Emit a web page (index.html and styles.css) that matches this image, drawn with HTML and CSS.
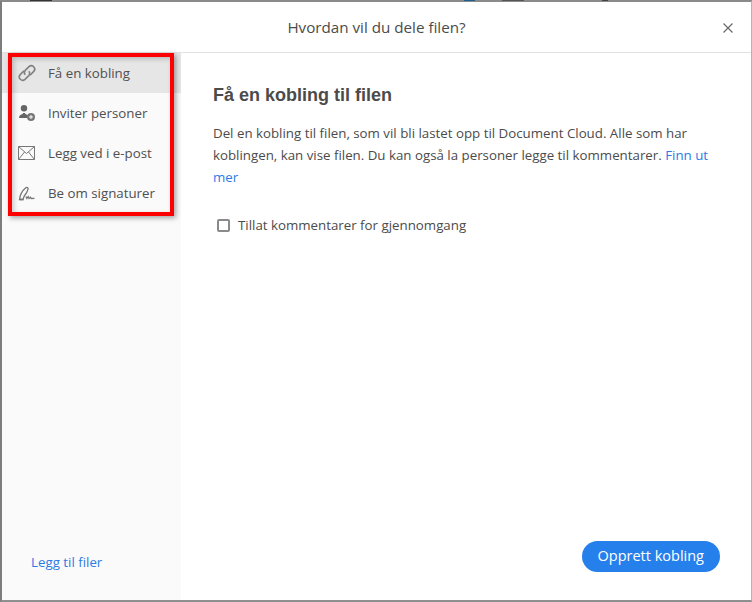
FILE: index.html
```html
<!DOCTYPE html>
<html lang="en">
<head>
    <meta charset="UTF-8">
    <meta name="viewport" content="width=device-width, initial-scale=1.0">
    <title>Hvordan vil du dele filen?</title>
    <link rel="stylesheet" href="styles.css">
</head>
<body>
    <div class="dialog">
        <div class="backdrop"></div>
        <header class="header">
            <h1 class="title">Hvordan vil du dele filen?</h1>
            <svg class="close" width="10" height="10" viewBox="0 0 10 10"><path d="M.5.5l9 9M9.5.5l-9 9" stroke="#666" stroke-width="1.1" fill="none"/></svg>
        </header>
        <div class="body">
            <aside class="sidebar">
                <nav class="menu">
                    <div class="item active">
                        <svg class="icon" width="20" height="20" viewBox="0 0 20 20" fill="none" stroke="#808080" stroke-width="1.6"><g transform="translate(-1 0)"><path d="M7 7.800L3.200 11.600A3.400 3.400 0 0 0 8 16.400L11.800 12.600A3.400 3.400 0 0 0 11.800 8.200"/><path d="M13 12.200L16.800 8.400A3.400 3.400 0 0 0 12 3.600L8.200 7.400A3.400 3.400 0 0 0 8.200 11.800"/></g></svg>
                        <span>Få en kobling</span>
                    </div>
                    <div class="item">
                        <svg class="icon" width="20" height="20" viewBox="0 0 20 20"><circle cx="6" cy="5.200" r="3.200" fill="#666"/><path d="M1 15c0-2 1-3 3-3.700.8-.3 1-.8 1-1.300h2c0 .5.200 1 1 1.300 1 .4 1.800.8 2.300 1.500L9 15z" fill="#666"/><circle cx="13" cy="14" r="4" fill="#777"/><path d="M13 12v4M11 14h4" stroke="#fff" stroke-width="1"/></svg>
                        <span>Inviter personer</span>
                    </div>
                    <div class="item">
                        <svg class="icon" width="20" height="20" viewBox="0 0 20 20" fill="none" stroke="#777"><path d="M.5 3.500h16v13H.5z"/><path d="M.5 3.500l8 7 8-7M.5 16.500l6-7.500M16.500 16.500l-6-7.500"/></svg>
                        <span>Legg ved i e-post</span>
                    </div>
                    <div class="item">
                        <svg class="icon" width="20" height="20" viewBox="0 0 20 20" fill="none" stroke="#777" stroke-width="1.300"><path d="M1.500 16.500C2 12 4.500 7.500 7.500 5c1.500-1.200 3-.4 2.500 1.300C9.300 9 7.500 11.500 6 13.500l-1 3z"/><path d="M1.500 16.500h4M8 13.500l.8 2 1.400-2 .8 2 1.500-1.300.8 1.300 3.200-.2"/></svg>
                        <span>Be om signaturer</span>
                    </div>
                </nav>
                <a class="add-files">Legg til filer</a>
            </aside>
            <main class="content">
                <h2 class="heading">Få en kobling til filen</h2>
                <p class="text">Del en kobling til filen, som vil bli lastet opp til Document Cloud. Alle som har koblingen, kan vise filen. Du kan også la personer legge til kommentarer. <a class="link">Finn ut mer</a></p>
                <label class="check"><span class="box"></span>Tillat kommentarer for gjennomgang</label>
                <div class="actions"><button class="primary">Opprett kobling</button></div>
            </main>
        </div>
        <div class="highlight"></div>
    </div>
</body>
</html>
```

FILE: styles.css
```css
html, body {
    margin: 0;
    height: 100%;
    overflow: hidden;
}
body {
    font-family: "Open Sans", sans-serif;
    font-size: 13.3px;
    color: #4b4b4b;
    background: #fff;
}
.dialog {
    position: relative;
    box-sizing: border-box;
    width: 752px;
    height: 602px;
    display: flex;
    flex-direction: column;
    border-top: 2px solid #8a8a8a;
    border-left: 2px solid #7d7d7d;
    border-bottom: 2px solid #8f8f8f;
    border-right: 1px solid #b5b5b5;
}
/* bits of the page behind the dialog, showing above its top edge */
.backdrop {
    position: absolute;
    left: -2px;
    top: -2px;
    width: 752px;
    height: 1px;
    background: linear-gradient(90deg,
        #8a8a8a 30px, #333 30px, #333 52px, #8a8a8a 52px,
        #8a8a8a 464px, #1f5f8f 464px, #1f5f8f 475px, #8a8a8a 475px,
        #8a8a8a 502px, #555 502px, #555 524px, #8a8a8a 524px,
        #8a8a8a 602px, #444 602px, #444 608px, #8a8a8a 608px);
}
.header {
    height: 50px;
    flex: none;
    display: flex;
    align-items: center;
    justify-content: center;
    position: relative;
    border-bottom: 1px solid #e1e1e1;
}
.title {
    margin: 0;
    font-size: 15.2px;
    font-weight: 400;
    color: #4b4b4b;
}
.close {
    position: absolute;
    right: 18px;
    top: 21px;
}
.body {
    flex: 1;
    display: flex;
    min-height: 0;
}
.sidebar {
    width: 179px;
    flex: none;
    background: #fafafa;
    display: flex;
    flex-direction: column;
    justify-content: space-between;
}
.item {
    height: 40px;
    display: flex;
    align-items: center;
    gap: 10px;
    padding-left: 16px;
    color: #505050;
}
.item.active {
    background: #e6e6e6;
}
.icon {
    flex: none;
}
.add-files {
    color: #2c7be5;
    margin: 0 0 29px 29px;
}
.content {
    flex: 1;
    display: flex;
    flex-direction: column;
    padding: 30px 31px 28px 32px;
}
.heading {
    margin: 0;
    font-family: "Liberation Sans", Arial, sans-serif;
    font-size: 18px;
    line-height: 24px;
    color: #4b4b4b;
}
.text {
    margin: 15px 0 0;
    line-height: 22px;
}
.link {
    color: #2c7be5;
}
.check {
    margin-top: 28px;
    margin-left: 4px;
    display: flex;
    align-items: center;
    gap: 8px;
}
.box {
    box-sizing: border-box;
    width: 13px;
    height: 13px;
    border: 2px solid #8a8a8a;
    border-radius: 2px;
}
.actions {
    margin-top: auto;
    display: flex;
    justify-content: flex-end;
}
.primary {
    height: 31px;
    padding: 0 16px;
    border: none;
    border-radius: 16px;
    background: #2680eb;
    color: #fff;
    font-family: "Open Sans", sans-serif;
    font-size: 14.5px;
    line-height: 29px;
    padding-bottom: 2px;
}
.highlight {
    position: absolute;
    left: 6px;
    top: 51px;
    width: 166px;
    height: 163px;
    box-sizing: border-box;
    border: 4px solid #f00;
    box-shadow: 2px 2px 5px rgba(0, 0, 0, .35), inset 2px 2px 5px rgba(0, 0, 0, .2);
}
```
